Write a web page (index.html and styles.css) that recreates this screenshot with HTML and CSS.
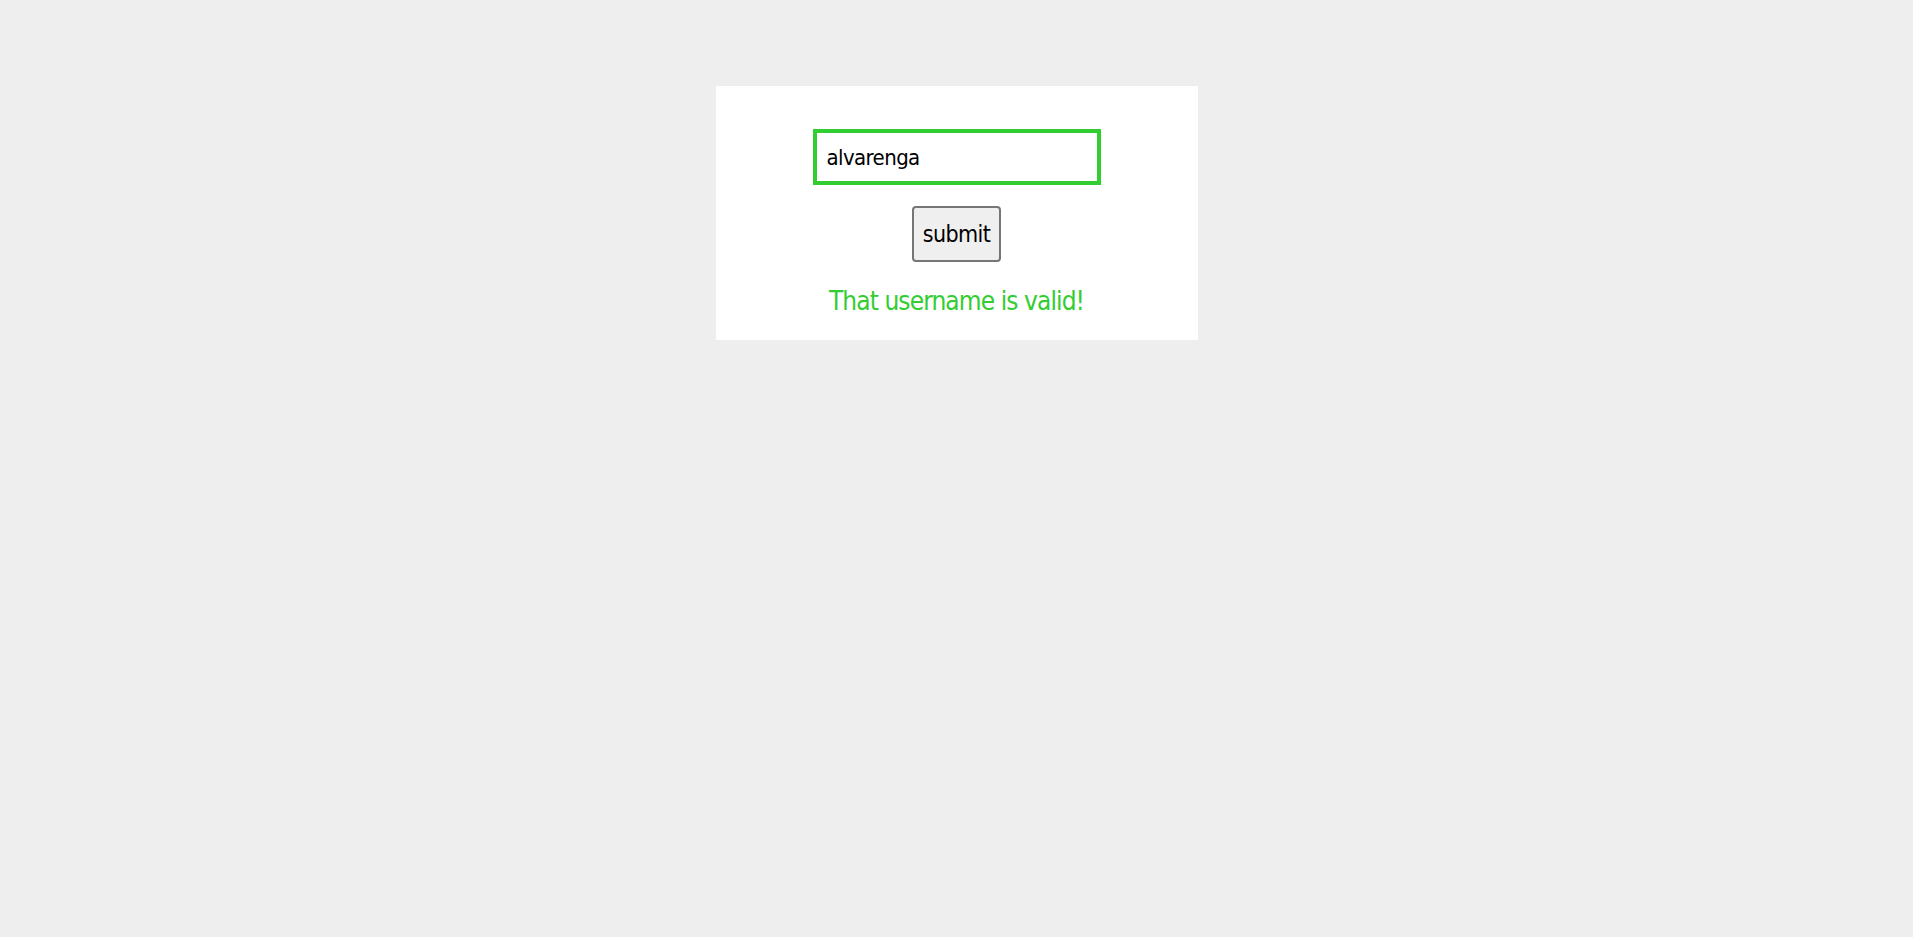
FILE: index.html
```html
<!DOCTYPE html>
<html lang="en">
<head>
<meta charset="utf-8">
<title>Username check</title>
<link rel="stylesheet" href="styles.css">
</head>
<body>
  <main class="card">
    <input class="username" type="text" value="alvarenga">
    <button class="submit" type="button">submit</button>
    <p class="message">That username is valid!</p>
  </main>
</body>
</html>
```
FILE: styles.css
```css
html, body {
  margin: 0;
  padding: 0;
}
body {
  background: #eeeeee;
  font-family: "DejaVu Sans Condensed", "DejaVu Sans", sans-serif;
  font-stretch: condensed;
  min-height: 937px;
}
.card {
  box-sizing: border-box;
  width: 482px;
  margin: 86px auto 0;
  background: #ffffff;
  padding: 43px 0 21px;
  display: flex;
  flex-direction: column;
  align-items: center;
}
.username {
  box-sizing: border-box;
  width: 288px;
  height: 56px;
  border: 4px solid #32cd32;
  padding: 0 10px;
  font-family: inherit;
  font-stretch: condensed;
  font-size: 22px;
  letter-spacing: -0.6px;
  color: #000;
  background: #fff;
  outline: none;
  border-radius: 0;
  margin: 0;
}
.submit {
  box-sizing: border-box;
  margin-top: 21px;
  width: 89px;
  height: 56px;
  border: 2px solid #767676;
  border-radius: 4px;
  background: #efefef;
  font-family: inherit;
  font-stretch: condensed;
  font-size: 23px;
  letter-spacing: -0.6px;
  color: #000;
  padding: 0;
}
.message {
  margin: 21px 0 0;
  font-size: 26px;
  letter-spacing: -0.9px;
  line-height: 36px;
  color: #32cd32;
}
```
